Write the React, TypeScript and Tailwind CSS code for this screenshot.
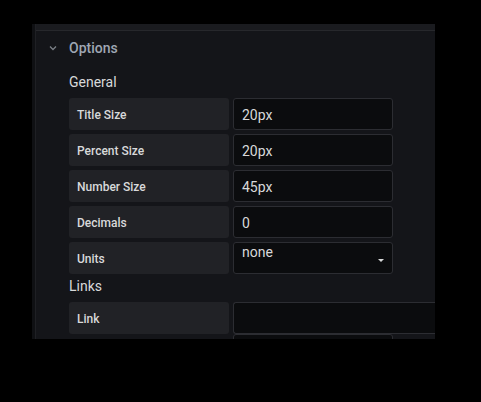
import React from "react";

const rows = [
  { label: "Title Size", value: "20px" },
  { label: "Percent Size", value: "20px" },
  { label: "Number Size", value: "45px" },
  { label: "Decimals", value: "0" },
];

function Label({ children }: { children: React.ReactNode }) {
  return (
    <div className="w-[160px] h-[32px] shrink-0 rounded-[3px] bg-[#212226] flex items-center px-2 pt-[2px] text-[12px] font-medium text-[#d8d9da]">
      {children}
    </div>
  );
}

export default function App() {
  return (
    <div
      className="w-[481px] h-[402px] bg-black overflow-hidden"
      style={{ fontFamily: "Roboto, 'Liberation Sans', sans-serif" }}
    >
      <div className="ml-[32px] mt-[24px] w-[403px] h-[315px] overflow-hidden flex bg-[#141519]">
        <div className="w-[4px] shrink-0 bg-[#0f1013] border-r border-[#1f2024]" />
        <div className="flex-1 flex flex-col min-w-0">
          <div className="h-[6px] shrink-0 bg-[#1a1b1f] border-b border-[#27282c] box-content" />
          <div className="flex flex-col pl-[33px]">
            <div className="h-[33px] flex items-center relative pt-[2px]">
              <svg
                className="absolute left-[-21px] top-[13px]"
                width="10"
                height="8"
                viewBox="0 0 10 8"
              >
                <path d="M2 2.5 L5 5.5 L8 2.5" stroke="#7b8087" strokeWidth="1.3" fill="none" />
              </svg>
              <span className="text-[14px] text-[#9fa7b3] font-medium">Options</span>
            </div>
            <div className="h-[34px] flex items-center text-[14px] text-[#d8d9da] pt-[3px]">General</div>
            <div className="flex flex-col gap-[4px]">
              {rows.map((r) => (
                <div key={r.label} className="flex gap-[4px]">
                  <Label>{r.label}</Label>
                  <div className="w-[160px] h-[32px] shrink-0 rounded-[3px] bg-[#0b0c0e] border border-[#2c2d32] flex items-center px-2 pt-[2px] text-[14px] text-[#d8d9da]">
                    {r.value}
                  </div>
                </div>
              ))}
              <div className="flex gap-[4px]">
                <Label>Units</Label>
                <div className="w-[160px] h-[32px] shrink-0 rounded-[3px] bg-[#0b0c0e] border border-[#2c2d32] relative px-2 text-[14px] leading-[18px] text-[#d8d9da]">
                  none
                  <svg className="absolute right-[7px] top-[15px]" width="8" height="5" viewBox="0 0 8 5">
                    <path d="M1 1 L7 1 L4 4 Z" fill="#d8d9da" />
                  </svg>
                </div>
              </div>
            </div>
            <div className="h-[28px] pt-[4px] leading-[16px] text-[14px] text-[#d8d9da]">Links</div>
            <div className="flex gap-[4px]">
              <Label>Link</Label>
              <div className="flex flex-col">
                <div className="w-[220px] h-[32px] shrink-0 rounded-l-[3px] bg-[#0b0c0e] border border-r-0 border-[#2c2d32]" />
                <div className="w-[160px] h-[32px] shrink-0 rounded-[3px] bg-[#0b0c0e] border border-[#2c2d32]" />
              </div>
            </div>
          </div>
        </div>
      </div>
    </div>
  );
}
